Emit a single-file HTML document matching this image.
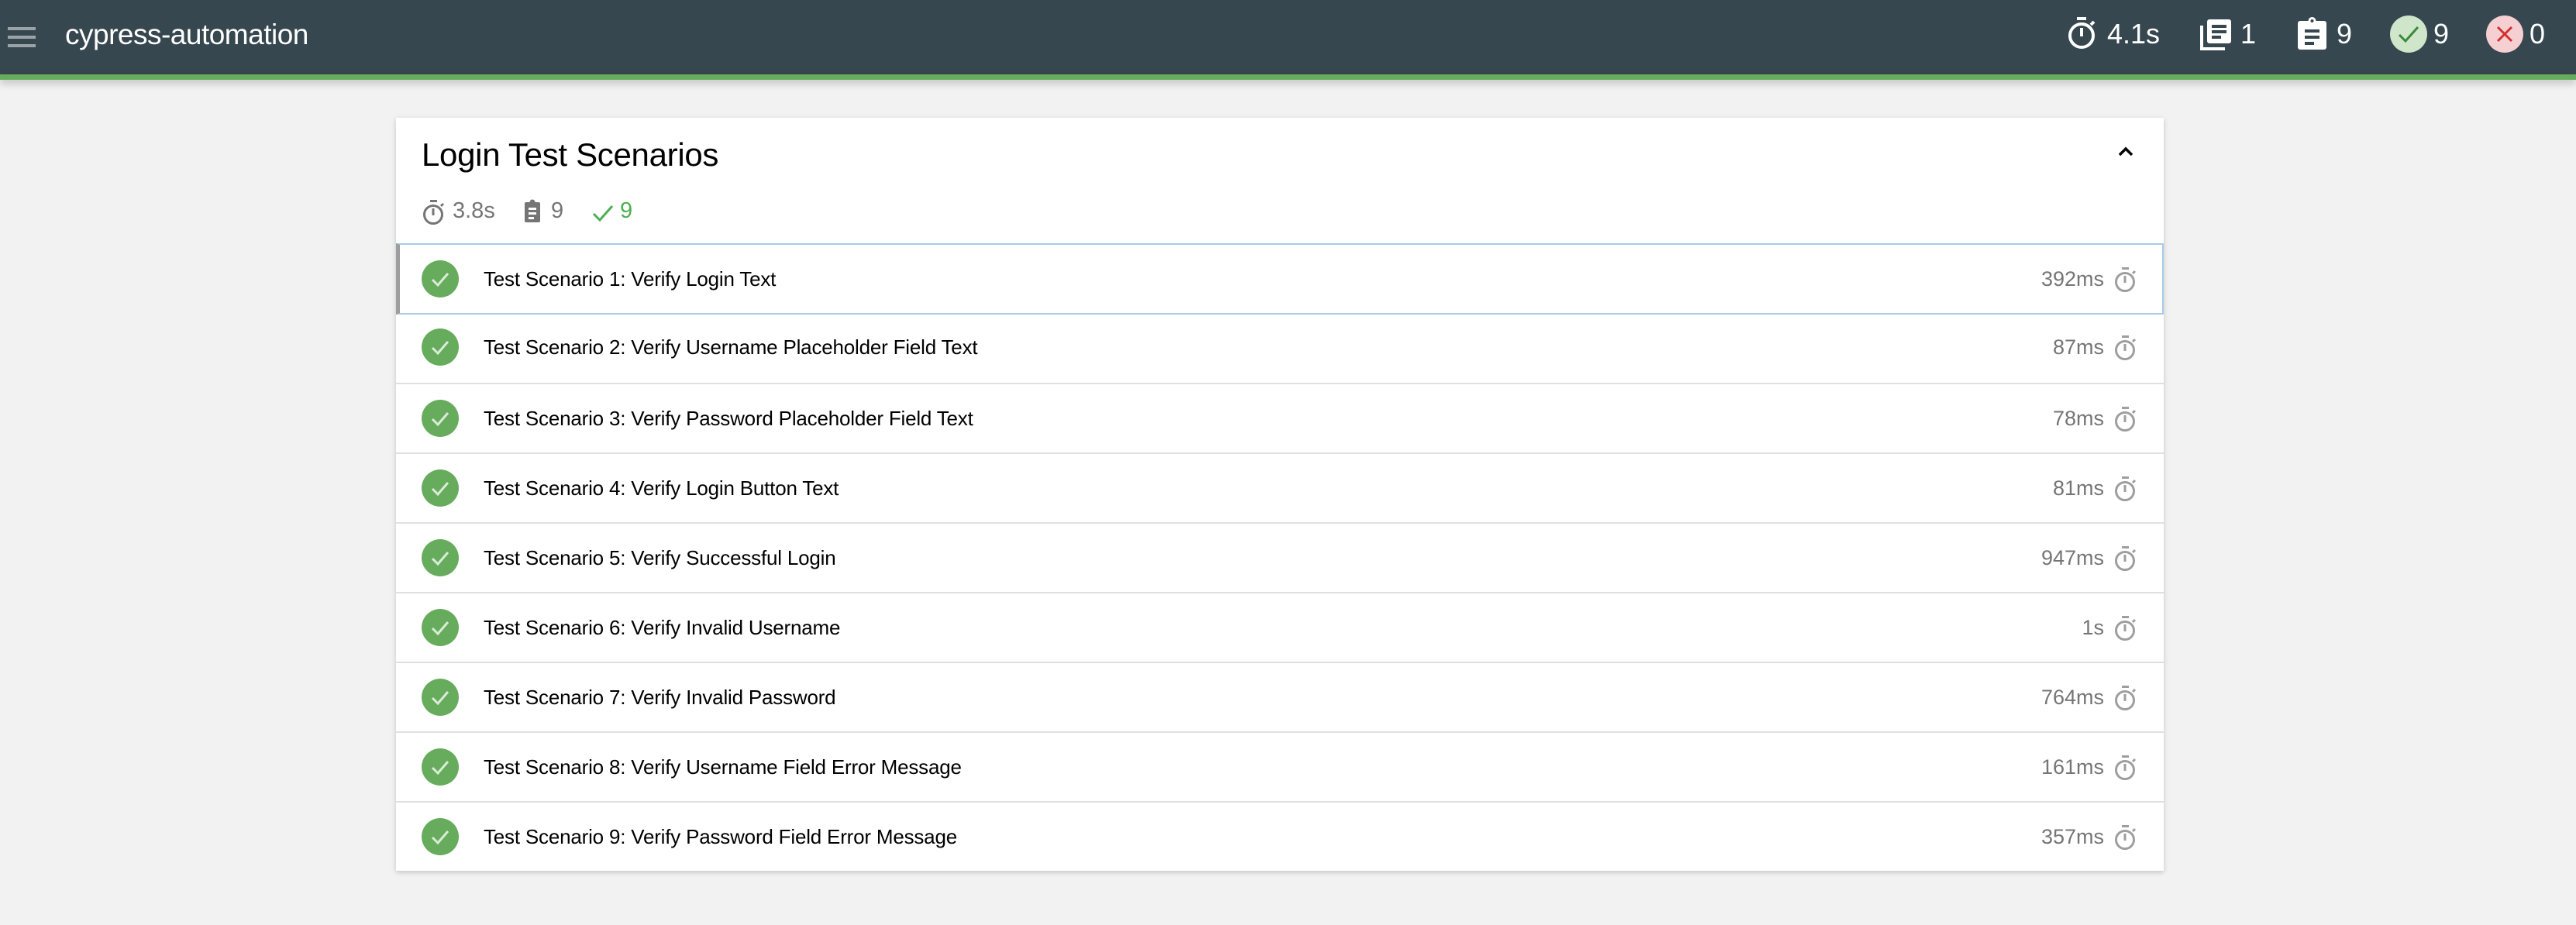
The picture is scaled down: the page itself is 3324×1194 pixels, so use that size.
<!DOCTYPE html>
<html><head><meta charset="utf-8"><style>
*{margin:0;padding:0;box-sizing:border-box}
body{width:3324px;height:1194px;background:#f2f2f2;font-family:"Liberation Sans",sans-serif;position:relative;overflow:hidden}
.hdr{position:absolute;left:0;top:0;width:3324px;height:96px;background:#37474f}
.gb{position:absolute;left:0;top:96px;width:3324px;height:7px;background:#66ac5c;box-shadow:0 4px 10px rgba(0,0,0,.25)}
.ham{position:absolute;left:10px;top:35px;width:36px}
.ham i{display:block;height:4px;background:#9aa3a8;margin-bottom:7px}
.ttl{position:absolute;left:84px;top:24px;color:#fff;font-size:37px;letter-spacing:-0.5px}
.ht{position:absolute;top:22px;color:#fff;font-size:36px;line-height:44px}
.hi{position:absolute}
.card{position:absolute;left:511px;top:152px;width:2281px;height:972px;background:#fff;box-shadow:0 2px 6px rgba(0,0,0,.2)}
.ct{position:absolute;left:33px;top:24px;font-size:42px;color:#000;letter-spacing:-0.3px}
.st{position:absolute;top:102px;font-size:29px;color:#757575;line-height:36px}
.row{position:absolute;left:0;width:2281px;height:90px;border-top:2px solid #e0e0e0}
.row .c{position:absolute;left:33px;top:20px;width:48px;height:48px;border-radius:50%;background:#66ac5c}
.row .t{position:absolute;left:113px;top:29px;font-size:26px;color:#000;letter-spacing:-0.2px}
.row .d{position:absolute;right:77px;top:29px;font-size:27px;color:#757575}
.row svg.w{position:absolute;left:2216px;top:28px}
</style></head><body>
<div class="hdr"></div><div class="gb"></div>
<div class="ham"><i></i><i></i><i></i></div>
<div class="ttl">cypress-automation</div>

<svg class="hi" style="left:2666px;top:20px" width="42" height="46" viewBox="0 0 42 46"><rect x="14" y="2" width="12" height="4" fill="#fff"/><circle cx="20" cy="26" r="15" fill="none" stroke="#fff" stroke-width="4"/><rect x="18" y="16" width="4" height="11" fill="#fff"/><path d="M32 12 L36 8" stroke="#fff" stroke-width="4"/></svg>
<div class="ht" style="left:2719px">4.1s</div>
<svg class="hi" style="left:2839px;top:23px" width="42" height="42" viewBox="0 0 42 42"><path d="M2 10 V40 H32" fill="none" stroke="#fff" stroke-width="4"/><rect x="9" y="2" width="31" height="31" rx="3" fill="#fff"/><rect x="15" y="9" width="19" height="4" fill="#37474f"/><rect x="15" y="16" width="19" height="4" fill="#37474f"/><rect x="15" y="23" width="12" height="4" fill="#37474f"/></svg>
<div class="ht" style="left:2891px">1</div>
<svg class="hi" style="left:2965px;top:22px" width="38" height="42" viewBox="0 0 38 42"><rect x="0" y="5" width="37" height="37" rx="3" fill="#fff"/><circle cx="18.5" cy="5" r="5" fill="#fff"/><circle cx="18.5" cy="5" r="2" fill="#37474f"/><rect x="9" y="16" width="19" height="4" fill="#37474f"/><rect x="9" y="24" width="19" height="4" fill="#37474f"/><rect x="9" y="32" width="12" height="4" fill="#37474f"/></svg>
<div class="ht" style="left:3015px">9</div>
<svg class="hi" style="left:3084px;top:20px" width="48" height="48" viewBox="0 0 48 48"><circle cx="24" cy="24" r="24" fill="#cfe6cb"/><path d="M12 25 L20 33 L36 15" fill="none" stroke="#3a8a3a" stroke-width="3"/></svg>
<div class="ht" style="left:3140px">9</div>
<svg class="hi" style="left:3208px;top:20px" width="48" height="48" viewBox="0 0 48 48"><circle cx="24" cy="24" r="24" fill="#f6cfd2"/><path d="M15 15 L33 33 M33 15 L15 33" stroke="#d23030" stroke-width="3"/></svg>
<div class="ht" style="left:3264px">0</div>

<div class="card">
<div class="ct">Login Test Scenarios</div>
<svg style="position:absolute;left:2222px;top:36px" width="20" height="14" viewBox="0 0 20 14"><path d="M2 12 L10 4 L18 12" fill="none" stroke="#000" stroke-width="3.5"/></svg>
<svg style="position:absolute;left:33px;top:105px" width="32" height="34" viewBox="0 0 32 34"><rect x="11" y="1" width="9" height="3" fill="#757575"/><circle cx="15" cy="20" r="11.5" fill="none" stroke="#757575" stroke-width="3"/><rect x="13.5" y="12" width="3" height="9" fill="#757575"/><path d="M25 9 L28 6" stroke="#757575" stroke-width="3"/></svg>
<div class="st" style="left:73px">3.8s</div>
<svg style="position:absolute;left:166px;top:105px" width="20" height="30" viewBox="0 0 20 30"><rect x="0" y="4" width="20" height="26" rx="2" fill="#757575"/><circle cx="10" cy="4" r="3.5" fill="#757575"/><rect x="5" y="11" width="10" height="3" fill="#fff"/><rect x="5" y="17" width="10" height="3" fill="#fff"/><rect x="5" y="23" width="7" height="3" fill="#fff"/></svg>
<div class="st" style="left:200px">9</div>
<svg style="position:absolute;left:253px;top:112px" width="28" height="22" viewBox="0 0 28 22"><path d="M2 12 L10 20 L26 2" fill="none" stroke="#4caf50" stroke-width="3"/></svg>
<div class="st" style="left:289px;color:#4caf50">9</div>

<div class="row" style="top:162px;border:2px solid #a9cbe6;border-left:5px solid #9e9e9e;height:92px;"><div class="c" style="left:28px"></div><svg style="position:absolute;left:28px;top:20px" width="48" height="48" viewBox="0 0 48 48"><path d="M14 25 L21 32 L34 17" fill="none" stroke="#d9ecd6" stroke-width="3"/></svg><div class="t" style="left:108px">Test Scenario 1: Verify Login Text</div><div class="d" style="right:75px">392ms</div><svg class="w" style="left:2211px" width="32" height="34" viewBox="0 0 32 34"><rect x="11" y="1" width="9" height="3" fill="#9e9e9e"/><circle cx="15" cy="20" r="11.5" fill="none" stroke="#9e9e9e" stroke-width="3"/><rect x="13.5" y="12" width="3" height="9" fill="#9e9e9e"/><path d="M25 9 L28 6" stroke="#9e9e9e" stroke-width="3"/></svg></div>

<div class="row" style="top:252px;border-top:none"><div class="c"></div><svg style="position:absolute;left:33px;top:20px" width="48" height="48" viewBox="0 0 48 48"><path d="M14 25 L21 32 L34 17" fill="none" stroke="#d9ecd6" stroke-width="3"/></svg><div class="t">Test Scenario 2: Verify Username Placeholder Field Text</div><div class="d">87ms</div><svg class="w" width="32" height="34" viewBox="0 0 32 34"><rect x="11" y="1" width="9" height="3" fill="#9e9e9e"/><circle cx="15" cy="20" r="11.5" fill="none" stroke="#9e9e9e" stroke-width="3"/><rect x="13.5" y="12" width="3" height="9" fill="#9e9e9e"/><path d="M25 9 L28 6" stroke="#9e9e9e" stroke-width="3"/></svg></div>

<div class="row" style="top:342px"><div class="c"></div><svg style="position:absolute;left:33px;top:20px" width="48" height="48" viewBox="0 0 48 48"><path d="M14 25 L21 32 L34 17" fill="none" stroke="#d9ecd6" stroke-width="3"/></svg><div class="t">Test Scenario 3: Verify Password Placeholder Field Text</div><div class="d">78ms</div><svg class="w" width="32" height="34" viewBox="0 0 32 34"><rect x="11" y="1" width="9" height="3" fill="#9e9e9e"/><circle cx="15" cy="20" r="11.5" fill="none" stroke="#9e9e9e" stroke-width="3"/><rect x="13.5" y="12" width="3" height="9" fill="#9e9e9e"/><path d="M25 9 L28 6" stroke="#9e9e9e" stroke-width="3"/></svg></div>

<div class="row" style="top:432px"><div class="c"></div><svg style="position:absolute;left:33px;top:20px" width="48" height="48" viewBox="0 0 48 48"><path d="M14 25 L21 32 L34 17" fill="none" stroke="#d9ecd6" stroke-width="3"/></svg><div class="t">Test Scenario 4: Verify Login Button Text</div><div class="d">81ms</div><svg class="w" width="32" height="34" viewBox="0 0 32 34"><rect x="11" y="1" width="9" height="3" fill="#9e9e9e"/><circle cx="15" cy="20" r="11.5" fill="none" stroke="#9e9e9e" stroke-width="3"/><rect x="13.5" y="12" width="3" height="9" fill="#9e9e9e"/><path d="M25 9 L28 6" stroke="#9e9e9e" stroke-width="3"/></svg></div>

<div class="row" style="top:522px"><div class="c"></div><svg style="position:absolute;left:33px;top:20px" width="48" height="48" viewBox="0 0 48 48"><path d="M14 25 L21 32 L34 17" fill="none" stroke="#d9ecd6" stroke-width="3"/></svg><div class="t">Test Scenario 5: Verify Successful Login</div><div class="d">947ms</div><svg class="w" width="32" height="34" viewBox="0 0 32 34"><rect x="11" y="1" width="9" height="3" fill="#9e9e9e"/><circle cx="15" cy="20" r="11.5" fill="none" stroke="#9e9e9e" stroke-width="3"/><rect x="13.5" y="12" width="3" height="9" fill="#9e9e9e"/><path d="M25 9 L28 6" stroke="#9e9e9e" stroke-width="3"/></svg></div>

<div class="row" style="top:612px"><div class="c"></div><svg style="position:absolute;left:33px;top:20px" width="48" height="48" viewBox="0 0 48 48"><path d="M14 25 L21 32 L34 17" fill="none" stroke="#d9ecd6" stroke-width="3"/></svg><div class="t">Test Scenario 6: Verify Invalid Username</div><div class="d">1s</div><svg class="w" width="32" height="34" viewBox="0 0 32 34"><rect x="11" y="1" width="9" height="3" fill="#9e9e9e"/><circle cx="15" cy="20" r="11.5" fill="none" stroke="#9e9e9e" stroke-width="3"/><rect x="13.5" y="12" width="3" height="9" fill="#9e9e9e"/><path d="M25 9 L28 6" stroke="#9e9e9e" stroke-width="3"/></svg></div>

<div class="row" style="top:702px"><div class="c"></div><svg style="position:absolute;left:33px;top:20px" width="48" height="48" viewBox="0 0 48 48"><path d="M14 25 L21 32 L34 17" fill="none" stroke="#d9ecd6" stroke-width="3"/></svg><div class="t">Test Scenario 7: Verify Invalid Password</div><div class="d">764ms</div><svg class="w" width="32" height="34" viewBox="0 0 32 34"><rect x="11" y="1" width="9" height="3" fill="#9e9e9e"/><circle cx="15" cy="20" r="11.5" fill="none" stroke="#9e9e9e" stroke-width="3"/><rect x="13.5" y="12" width="3" height="9" fill="#9e9e9e"/><path d="M25 9 L28 6" stroke="#9e9e9e" stroke-width="3"/></svg></div>

<div class="row" style="top:792px"><div class="c"></div><svg style="position:absolute;left:33px;top:20px" width="48" height="48" viewBox="0 0 48 48"><path d="M14 25 L21 32 L34 17" fill="none" stroke="#d9ecd6" stroke-width="3"/></svg><div class="t">Test Scenario 8: Verify Username Field Error Message</div><div class="d">161ms</div><svg class="w" width="32" height="34" viewBox="0 0 32 34"><rect x="11" y="1" width="9" height="3" fill="#9e9e9e"/><circle cx="15" cy="20" r="11.5" fill="none" stroke="#9e9e9e" stroke-width="3"/><rect x="13.5" y="12" width="3" height="9" fill="#9e9e9e"/><path d="M25 9 L28 6" stroke="#9e9e9e" stroke-width="3"/></svg></div>

<div class="row" style="top:882px"><div class="c"></div><svg style="position:absolute;left:33px;top:20px" width="48" height="48" viewBox="0 0 48 48"><path d="M14 25 L21 32 L34 17" fill="none" stroke="#d9ecd6" stroke-width="3"/></svg><div class="t">Test Scenario 9: Verify Password Field Error Message</div><div class="d">357ms</div><svg class="w" width="32" height="34" viewBox="0 0 32 34"><rect x="11" y="1" width="9" height="3" fill="#9e9e9e"/><circle cx="15" cy="20" r="11.5" fill="none" stroke="#9e9e9e" stroke-width="3"/><rect x="13.5" y="12" width="3" height="9" fill="#9e9e9e"/><path d="M25 9 L28 6" stroke="#9e9e9e" stroke-width="3"/></svg></div>
</div>
</body></html>
